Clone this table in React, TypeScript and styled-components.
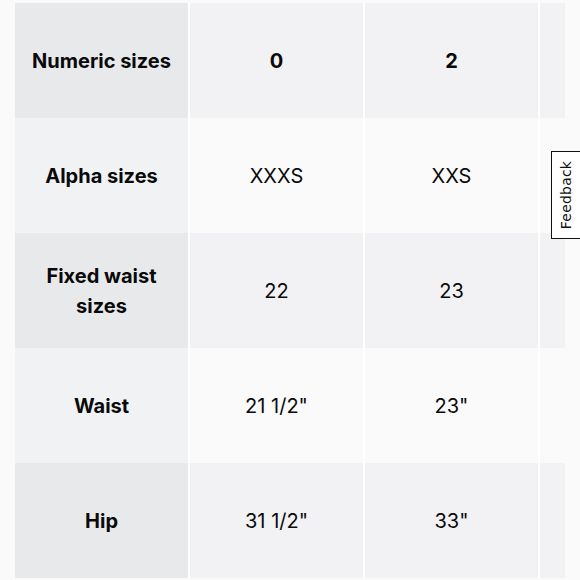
import React from 'react';
import styled, { createGlobalStyle } from 'styled-components';

const GlobalStyle = createGlobalStyle`
    html, body {
        margin: 0;
        padding: 0;
        background: #fafafa;
    }
    body {
        font-family: Inter, "Noto Sans", "Liberation Sans", sans-serif;
        color: #0a0a0a;
        overflow: hidden;
    }
`;

const Page = styled.div`
    position: relative;
    width: 580px;
    height: 580px;
    padding: 3px 0 0 15px;
    box-sizing: border-box;
    overflow: hidden;
`;

const Scroller = styled.div`
    width: 550px;
    overflow: hidden;
`;

const Table = styled.table`
    width: 700px;
    border-collapse: separate;
    border-spacing: 0;
    table-layout: fixed;
`;

const Row = styled.tr<{ $odd: boolean }>`
    background: ${p => (p.$odd ? '#f2f2f4' : '#fafafa')};
`;

const HeadCell = styled.th<{ $odd: boolean }>`
    width: 175px;
    height: 115px;
    padding: 0 8px;
    box-sizing: border-box;
    border-right: 2px solid #fff;
    background: ${p => (p.$odd ? '#e8e9eb' : '#f1f2f4')};
    font-size: 20px;
    line-height: 30px;
    font-weight: 700;
    text-align: center;
    vertical-align: middle;
    color: #0a0a0a;
`;

const Cell = styled.td<{ $bold?: boolean }>`
    width: 175px;
    height: 115px;
    padding: 0 8px;
    box-sizing: border-box;
    border-right: 2px solid #fff;
    font-size: 20px;
    line-height: 30px;
    font-weight: ${p => (p.$bold ? 700 : 400)};
    text-align: center;
    vertical-align: middle;
    color: #0a0a0a;
    white-space: nowrap;
`;

const FeedbackTab = styled.button`
    position: absolute;
    right: 0;
    top: 151px;
    width: 29px;
    height: 88px;
    padding: 0;
    margin: 0;
    background: #fff;
    border: 1px solid #111;
    border-right: none;
    display: flex;
    align-items: center;
    justify-content: center;
    cursor: pointer;
`;

const FeedbackLabel = styled.span`
    display: block;
    transform: rotate(-90deg);
    font-family: "DejaVu Sans", Verdana, sans-serif;
    font-size: 14px;
    color: #111;
    white-space: nowrap;
    letter-spacing: 0.2px;
`;

// the fourth column is scrolled mostly out of view; only its edge shows
const rows = [
    { label: 'Numeric sizes', values: ['0', '2', ''], bold: true },
    { label: 'Alpha sizes', values: ['XXXS', 'XXS', ''] },
    { label: 'Fixed waist sizes', values: ['22', '23', ''] },
    { label: 'Waist', values: ['21 1/2"', '23"', ''] },
    { label: 'Hip', values: ['31 1/2"', '33"', ''] },
];

const App = () => (
    <>
        <GlobalStyle />
        <Page>
            <Scroller>
                <Table>
                    <tbody>
                        {rows.map((row, i) => (
                            <Row key={row.label} $odd={i % 2 === 0}>
                                <HeadCell $odd={i % 2 === 0}>{row.label}</HeadCell>
                                {row.values.map((v, j) => (
                                    <Cell key={j} $bold={row.bold}>
                                        {v}
                                    </Cell>
                                ))}
                            </Row>
                        ))}
                    </tbody>
                </Table>
            </Scroller>
            <FeedbackTab>
                <FeedbackLabel>Feedback</FeedbackLabel>
            </FeedbackTab>
        </Page>
    </>
);

export default App;
